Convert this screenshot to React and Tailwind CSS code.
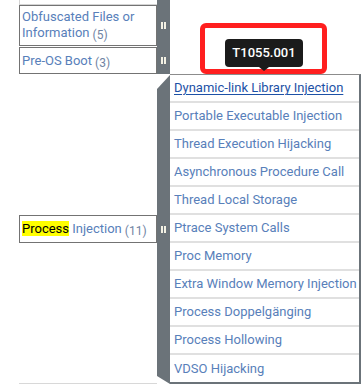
import React from 'react';

const subTechniques = [
  'Dynamic-link Library Injection',
  'Portable Executable Injection',
  'Thread Execution Hijacking',
  'Asynchronous Procedure Call',
  'Thread Local Storage',
  'Ptrace System Calls',
  'Proc Memory',
  'Extra Window Memory Injection',
  'Process Doppelgänging',
  'Process Hollowing',
  'VDSO Hijacking',
];

const Handle = () => (
  <div className="flex gap-[1.5px]">
    <div className="w-[1.5px] h-[7px] bg-[#f3f1e4]"></div>
    <div className="w-[1.5px] h-[7px] bg-[#f3f1e4]"></div>
  </div>
);

const Count = ({ n }) => (
  <span className="inline-block text-[12px] leading-[12px] text-[#7184a3] translate-y-[2px] ml-[3px]">({n})</span>
);

export default function App() {
  return (
    <div className="w-[362px] h-[384px] overflow-hidden bg-white relative font-['Roboto',sans-serif] text-[13px] text-[#5880ba]">
      {/* top: collapsed techniques */}
      <div className="flex pl-[19px] h-[74px]">
        <div className="w-[138px] flex flex-col">
          <div className="h-[5px] border-l border-b border-[#d4d4d4]"></div>
          <div className="h-[41px] border border-[#737373] px-[2px] pt-[3px] leading-[16px]">
            Obfuscated Files or Information<Count n={5} />
          </div>
          <div className="h-[27px] mt-[1px] border border-[#737373] px-[2px] flex items-center leading-[16px]">
            <span>Pre-OS Boot<Count n={3} /></span>
          </div>
        </div>
        <div className="w-[13px] bg-[#6b7379] flex flex-col">
          <div className="h-[46px] pt-[5px] flex items-center justify-center">
            <Handle />
          </div>
          <div className="h-[28px] flex items-center justify-center">
            <Handle />
          </div>
        </div>
      </div>

      {/* bottom: expanded Process Injection */}
      <div className="flex pl-[19px] h-[310px]">
        <div className="w-[138px] flex flex-col">
          <div className="flex-1"></div>
          <div className="h-[28px] border border-[#737373] px-[2px] flex items-center leading-[16px]">
            <span>
              <span className="bg-[#ffff00] text-black">Process</span> Injection<Count n={11} />
            </span>
          </div>
          <div className="flex-1"></div>
          <div className="h-[1px] bg-[#d8d8d8]"></div>
        </div>
        <div className="w-[13px] bg-[#6b7379] flex items-center justify-center [clip-path:polygon(0_15px,100%_1px,100%_100%,0_calc(100%-8px))]">
          <Handle />
        </div>
        <div className="w-[191px] flex flex-col border-t border-t-[#8c8c8c] border-r-2 border-b-2 border-[#6b7379]">
          {subTechniques.map((name, i) => (
            <div
              key={name}
              className={
                i === subTechniques.length - 1
                  ? 'h-[27px] pl-[4px] flex items-center'
                  : 'h-[28px] pl-[4px] flex items-center border-b-2 border-[#e0e0e0]'
              }
            >
              {i === 0 ? (
                <span className="text-[#1d51a6] underline underline-offset-2">{name}</span>
              ) : (
                <span>{name}</span>
              )}
            </div>
          ))}
        </div>
      </div>

      {/* tooltip + highlight */}
      <div className="absolute left-[200px] top-[23px] w-[127px] h-[51px] border-[5px] border-[#ff1f1f] rounded-[6px]"></div>
      <div className="absolute left-[225px] top-[39px] w-[78px] h-[28px] bg-[#1b1b1b] rounded-[4px] text-white text-[13px] font-medium flex items-center justify-center">
        T1055.001
        <div className="absolute left-[34px] top-[28px] w-0 h-0 border-l-[5px] border-r-[5px] border-t-[4px] border-l-transparent border-r-transparent border-t-[#1b1b1b]"></div>
      </div>
    </div>
  );
}
